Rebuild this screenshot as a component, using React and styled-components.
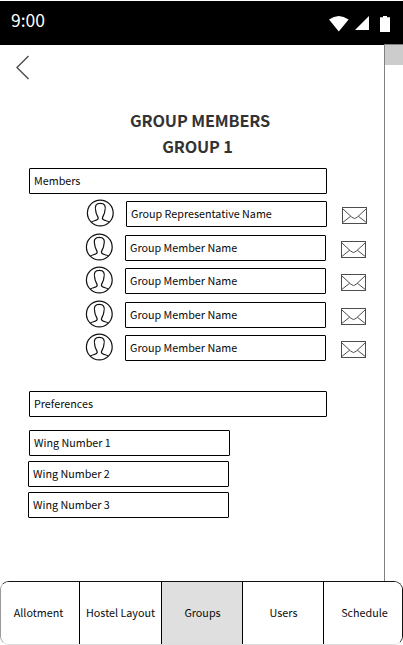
import React from "react";
import styled, { createGlobalStyle } from "styled-components";

const GlobalStyle = createGlobalStyle`
  *, *::before, *::after { box-sizing: border-box; }
  body { margin: 0; background: #fff; overflow: hidden; }
`;

const Screen = styled.div`
  width: 403px;
  height: 645px;
  display: flex;
  flex-direction: column;
  background: #fff;
  color: #0a0a0a;
  font-family: "Noto Sans CJK SC", "Noto Sans", sans-serif;
  font-size: 10.75px;
  overflow: hidden;
`;

const StatusBar = styled.header`
  flex: none;
  height: 44px;
  margin-top: 1px;
  padding: 0 12px 0 11px;
  display: flex;
  justify-content: space-between;
  background: #000;
`;

const Clock = styled.time`
  color: #fff;
  font-size: 17.5px;
  line-height: 37px;
`;

const StatusIcons = styled.svg`
  width: 62px;
  height: 18px;
  margin-top: 14px;
`;

const Body = styled.div`
  flex: 1;
  min-height: 0;
  display: flex;
`;

const Content = styled.main`
  width: 384px;
  display: flex;
  flex-direction: column;
`;

const BackButton = styled.button`
  width: 16px;
  height: 26px;
  margin: 10px 0 0 15px;
  padding: 0;
  border: 0;
  background: none;
  svg { display: block; }
`;

const Title = styled.h1`
  height: 52px;
  margin: 26px 0 0 16px;
  color: #333;
  font-size: 16.3px;
  font-weight: 700;
  line-height: 26px;
  letter-spacing: -0.15px;
  text-align: center;
`;

const TitleLine = styled.span`
  display: block;
  padding-right: ${(p) => p.$inset || 0}px;
`;

const Field = styled.div`
  flex: none;
  width: ${(p) => p.$width}px;
  height: 26px;
  padding-left: 4px;
  border: 1px solid #000;
  border-radius: 1px;
  line-height: 24px;
  white-space: nowrap;
`;

const Section = styled.section`
  margin: ${(p) => p.$top}px 0 0 29px;
`;

const MemberList = styled.div`
  margin: 5px 0 0 57px;
`;

const MemberRow = styled.div`
  display: flex;
  height: 28px;
  margin-left: ${(p) => (p.$lead ? 0 : -1)}px;
  margin-top: ${(p) => p.$gap}px;
`;

const Avatar = styled.svg`
  width: 28px;
  height: 28px;
  margin-right: 12px;
`;

const MemberField = styled(Field)`
  margin-top: 2px;
`;

const Envelope = styled.svg`
  width: 25px;
  height: 17px;
  margin: 8px 0 0 15px;
`;

const WingList = styled.div`
  margin-top: 13px;
  display: flex;
  flex-direction: column;
  gap: 5px;
`;

const WingField = styled(Field)`
  margin-left: ${(p) => (p.$first ? 0 : -1)}px;
`;

const Scrollbar = styled.div`
  width: 19px;
  margin-top: -1px;
  border-left: 1px solid #808080;
  background: #fff;
`;

const ScrollThumb = styled.div`
  height: 21px;
  border-top: 1px solid #808080;
  background: #ccc;
`;

const TabBar = styled.nav`
  flex: none;
  height: 64px;
  display: grid;
  grid-template-columns: 79px 82px 81px 81px 79px;
  border: 1px solid #111;
  border-left-color: #999;
  border-bottom-color: #ddd;
  border-radius: 9px;
  overflow: hidden;
`;

const Tab = styled.button`
  margin: 0;
  padding: 0 ${(p) => p.$right || 0}px 1px ${(p) => p.$left || 0}px;
  border: 0;
  border-right: 1px solid #000;
  background: ${(p) => (p.$active ? "#dfdfdf" : "#fff")};
  color: inherit;
  font: inherit;
  white-space: nowrap;
  &:last-child { border-right: 0; }
`;

const members = [
  { name: "Group Representative Name", gap: 0 },
  { name: "Group Member Name", gap: 6 },
  { name: "Group Member Name", gap: 5 },
  { name: "Group Member Name", gap: 6 },
  { name: "Group Member Name", gap: 5 },
];

const tabs = [
  { label: "Allotment", right: 3 },
  { label: "Hostel Layout" },
  { label: "Groups", active: true, left: 1 },
  { label: "Users", left: 1 },
  { label: "Schedule", left: 2 },
];

function AvatarIcon() {
  return (
    <Avatar viewBox="0 0 28 28" fill="none" stroke="#111" strokeWidth="1.2">
      <circle cx="14.3" cy="14" r="12.9" />
      <path d="M5.4 23C7.5 21.5 12.2 21.6 12.2 19.2C12.2 17.5 9.8 15.5 9.7 11.5C8.5 6.5 10.2 4.4 14.3 4.4S20.1 6.5 18.9 11.5C18.8 15.5 16.4 17.5 16.4 19.2C16.4 21.6 21.1 21.5 23.2 23" />
    </Avatar>
  );
}

function EnvelopeIcon() {
  return (
    <Envelope viewBox="0 0 25 17" fill="none" stroke="#4d4d4d">
      <rect x=".5" y=".5" width="24" height="16" />
      <path d="M1 2L9.8 10.2Q12.5 13 15.2 10.2L24 2M1 15.3L8.7 9.2M24 15.3L16.3 9.2" />
    </Envelope>
  );
}

export default function App() {
  return (
    <Screen>
      <GlobalStyle />
      <StatusBar>
        <Clock>9:00</Clock>
        <StatusIcons viewBox="0 0 62 18" fill="#fff">
          <path d="M0 4.4Q9.8-2.6 19.6 4.4L9.8 16.6Z" />
          <path d="M26 15L40 1V15Z" />
          <path d="M51 2.2H54V1H58V2.2H61V17H51Z" />
        </StatusIcons>
      </StatusBar>
      <Body>
        <Content>
          <BackButton aria-label="Back">
            <svg width="16" height="26" fill="none" stroke="#4d4d4d" strokeWidth="1.4">
              <path d="M13.5 1L2 12.5L13.5 24" />
            </svg>
          </BackButton>
          <Title>
            <TitleLine>GROUP MEMBERS</TitleLine>
            <TitleLine $inset={5}>GROUP 1</TitleLine>
          </Title>
          <Section $top={9}>
            <Field $width={298}>Members</Field>
            <MemberList>
              {members.map((m, i) => (
                <MemberRow key={i} $lead={i === 0} $gap={m.gap}>
                  <AvatarIcon />
                  <MemberField $width={201}>{m.name}</MemberField>
                  <EnvelopeIcon />
                </MemberRow>
              ))}
            </MemberList>
          </Section>
          <Section $top={30}>
            <Field $width={298}>Preferences</Field>
            <WingList>
              {[1, 2, 3].map((n) => (
                <WingField key={n} $width={201} $first={n === 1}>
                  Wing Number {n}
                </WingField>
              ))}
            </WingList>
          </Section>
        </Content>
        <Scrollbar>
          <ScrollThumb />
        </Scrollbar>
      </Body>
      <TabBar>
        {tabs.map((t) => (
          <Tab key={t.label} $active={t.active} $left={t.left} $right={t.right}>
            {t.label}
          </Tab>
        ))}
      </TabBar>
    </Screen>
  );
}
